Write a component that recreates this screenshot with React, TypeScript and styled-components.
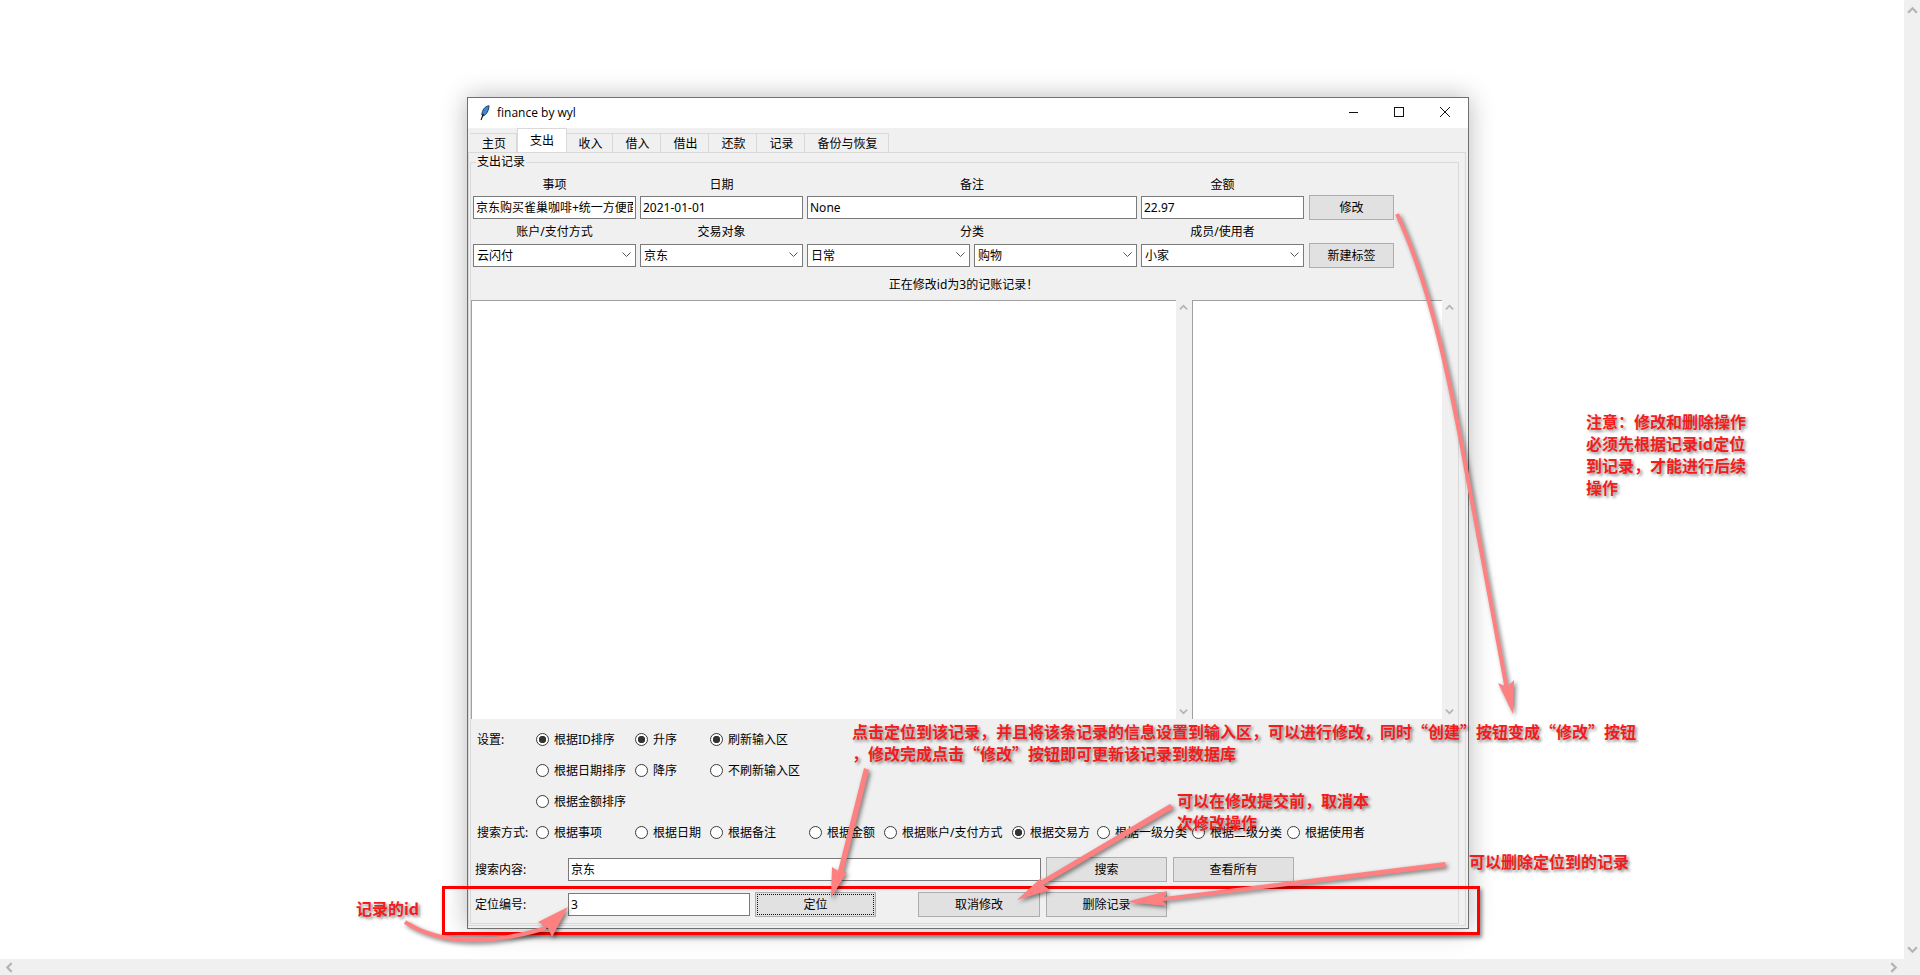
import React from "react";
import styled, { createGlobalStyle } from "styled-components";

const Global = createGlobalStyle`
  html, body { margin: 0; padding: 0; background: #fff; overflow: hidden; }
  body { font-family: "Noto Sans", "Noto Sans CJK SC", sans-serif; font-size: 12px; color: #000; }
`;

const Viewport = styled.div`
  position: relative;
  width: 1920px;
  height: 975px;
  overflow: hidden;
  display: grid;
  grid-template-columns: 1fr 16px;
  grid-template-rows: 1fr 16px;
`;
const Canvas = styled.main`
  padding: 97px 0 0 467px;
  background: #fff;
  overflow: hidden;
`;
const PageBarV = styled.div`
  background: #f0f0f0;
  grid-row: 1 / 3;
  grid-column: 2;
  display: flex;
  flex-direction: column;
  justify-content: space-between;
  align-items: center;
  padding: 5px 0 20px;
`;
const PageBarH = styled.div`
  background: #f0f0f0;
  display: flex;
  justify-content: space-between;
  align-items: center;
  padding: 0 5px 0 4px;
`;

const Win = styled.section`
  width: 1002px;
  box-sizing: border-box;
  border: 1px solid #6f6f6f;
  background: #f0f0f0;
  box-shadow: 0 0 24px rgba(0, 0, 0, 0.28);
`;
const TitleBar = styled.header`
  height: 30px;
  background: #fff;
  display: flex;
  align-items: center;
  padding-left: 12px;
`;
const TitleText = styled.span`
  margin: 0 0 2px 7px;
  font-size: 12px;
  font-family: "Open Sans", "Noto Sans", sans-serif;
`;
const WinControls = styled.div`
  margin-left: auto;
  display: flex;
`;
const WinButton = styled.span`
  box-sizing: border-box;
  width: 46px;
  height: 30px;
  padding-bottom: 2px;
  display: flex;
  align-items: center;
  justify-content: center;
`;

const TabStrip = styled.nav`
  height: 24px;
  display: flex;
  align-items: flex-end;
  padding-left: 2px;
`;
const Tab = styled.span<{ $w: number; $active?: boolean }>`
  box-sizing: border-box;
  width: ${(p) => p.$w}px;
  height: ${(p) => (p.$active ? 24 : 19)}px;
  padding: 0 0 ${(p) => (p.$active ? 2 : 1)}px ${(p) => (p.$active ? 0 : 2)}px;
  background: ${(p) => (p.$active ? "#fff" : "#f0f0f0")};
  border: 1px solid #d9d9d9;
  border-width: 1px 1px 0 ${(p) => (p.$active ? 1 : 0)}px;
  display: flex;
  align-items: center;
  justify-content: center;
`;
const TabPanel = styled.div`
  border: 1px solid #d9d9d9;
  margin: 0 2px 2px 0;
  padding: 9px 6px 1px 1px;
`;
const Frame = styled.div`
  position: relative;
  border: 1px solid #d9d9d9;
  padding-bottom: 6px;
`;
const Legend = styled.span`
  position: absolute;
  left: 5px;
  top: -9px;
  line-height: 16px;
  padding: 0 1px;
  background: #f0f0f0;
`;

const FormGrid = styled.div`
  margin: 11px 0 0 2px;
  display: grid;
  grid-template-columns: repeat(6, 163px);
  grid-template-rows: 21px 25px 23px 25px;
  column-gap: 4px;
  align-items: center;
`;
const FieldLabel = styled.label`
  text-align: center;
  padding-bottom: 2px;
`;
const WideLabel = styled(FieldLabel)`
  grid-column: span 2;
`;
const GapCell = styled.span``;
const Entry = styled.input<{ $w?: number }>`
  box-sizing: border-box;
  height: 23px;
  width: ${(p) => (p.$w ? `${p.$w}px` : "100%")};
  border: 1px solid #7a7a7a;
  padding: 0 2px 1px;
  margin: 0;
  outline: none;
  background: #fff;
  color: #000;
  font: 12px "Noto Sans", "Noto Sans CJK SC", sans-serif;
`;
const WideEntry = styled(Entry)`
  grid-column: span 2;
`;
const Combo = styled.div`
  box-sizing: border-box;
  height: 23px;
  border: 1px solid #7a7a7a;
  background: #fff;
  padding: 0 4px 1px 3px;
  display: flex;
  align-items: center;
  justify-content: space-between;
`;
const Btn = styled.button<{ $w: number; $ml?: number; $focus?: boolean }>`
  box-sizing: border-box;
  width: ${(p) => p.$w}px;
  height: 25px;
  margin: 0 0 0 ${(p) => p.$ml ?? 0}px;
  padding: 0 0 1px;
  background: #e1e1e1;
  border: 1px solid #adadad;
  color: #000;
  font: 12px "Noto Sans", "Noto Sans CJK SC", sans-serif;
  outline: ${(p) => (p.$focus ? "1px dotted #111" : "none")};
  outline-offset: -3px;
`;
const Status = styled.div`
  height: 32px;
  display: flex;
  align-items: center;
  justify-content: center;
  margin-right: 2px;
`;
const TextRow = styled.div`
  display: flex;
  height: 419px;
`;
const TextPane = styled.div<{ $w: number }>`
  box-sizing: border-box;
  width: ${(p) => p.$w}px;
  background: #fff;
  border-left: 1px solid #a0a0a0;
  border-top: 1px solid #a0a0a0;
`;
const ScrollTrack = styled.div`
  width: 16px;
  display: flex;
  flex-direction: column;
  justify-content: space-between;
  align-items: center;
  padding: 3px 1px 3px 0;
  box-sizing: border-box;
`;
const Options = styled.div`
  margin: 5px 0 0 6px;
  display: grid;
  grid-template-columns: 59px 99px 75px 99px 75px 128px 85px 95px 95px auto;
  grid-auto-rows: 31px;
  align-items: center;
`;
const RowLabel = styled.span`
  grid-column: 1;
  white-space: nowrap;
  padding-bottom: 1px;
`;
const Option = styled.span`
  display: flex;
  align-items: center;
  gap: 5px;
  white-space: nowrap;
`;
const OptionText = styled.span`
  margin-top: -1px;
`;
const RadioDot = styled.span<{ $on?: boolean }>`
  box-sizing: border-box;
  width: 13px;
  height: 13px;
  flex: none;
  border-radius: 50%;
  border: 1px solid #3a3a3a;
  background: ${(p) => (p.$on ? "radial-gradient(circle, #333 0 3.4px, #fff 4px)" : "#fff")};
`;
const ActionRow = styled.div<{ $mt: number }>`
  display: flex;
  align-items: center;
  height: 25px;
  margin: ${(p) => p.$mt}px 0 0 4px;
  gap: 5px;
`;
const ActionLabel = styled.span`
  width: 88px;
  padding-bottom: 1px;
`;

/* Annotations drawn on top of the screenshot */
const Overlay = styled.svg`
  position: absolute;
  left: 0;
  top: 0;
  width: 1920px;
  height: 975px;
  pointer-events: none;
  filter: drop-shadow(2px 2px 2px rgba(0, 0, 0, 0.5));
`;
const ArrowShape = styled.path`
  fill: #ff8080;
`;
const ArrowStem = styled.path`
  fill: none;
  stroke: #ff8080;
  stroke-width: 4;
`;
const RedBox = styled.div`
  position: absolute;
  left: 442px;
  top: 886px;
  width: 1032px;
  height: 43px;
  border: 3px solid #f00;
  box-shadow: 2px 3px 4px rgba(0, 0, 0, 0.45);
`;
const Note = styled.div<{ $x: number; $y: number; $w: number }>`
  position: absolute;
  left: ${(p) => p.$x}px;
  top: ${(p) => p.$y}px;
  width: ${(p) => p.$w}px;
  font: 700 16px/22px "Noto Sans CJK SC", "Noto Sans", sans-serif;
  color: #f41c1c;
  text-shadow: 2px 2px 3px rgba(0, 0, 0, 0.45);
`;

const Chevron = ({ dir, size = 9 }: { dir: "up" | "down" | "left" | "right"; size?: number }) => {
  const rot = { up: 180, down: 0, left: 90, right: -90 }[dir];
  return (
    <svg width={size} height={size} viewBox="0 0 10 10" style={{ transform: `rotate(${rot}deg)` }}>
      <path d="M1 3 L5 7 L9 3" fill="none" stroke="#b4b4b4" strokeWidth="2" />
    </svg>
  );
};
const ComboArrow = () => (
  <svg width="9" height="6" viewBox="0 0 9 6">
    <path d="M0.5 0.5 L4.5 4.5 L8.5 0.5" fill="none" stroke="#555" strokeWidth="1" />
  </svg>
);
const Feather = () => (
  <svg width="10" height="16" viewBox="0 0 10 16">
    <path d="M9 0.8 C5 1 2 5 1.8 10 L3 11 C6.5 10 9 5 9 0.8Z" fill="#3b86d6" stroke="#16324f" strokeWidth="0.9" />
    <path d="M3.4 9 L1 15" stroke="#111" strokeWidth="1.1" fill="none" />
  </svg>
);

const tabs: [string, number, boolean?][] = [
  ["主页", 47], ["支出", 50, true], ["收入", 46], ["借入", 48], ["借出", 48], ["还款", 48], ["记录", 48], ["备份与恢复", 84],
];

const Radio = ({ text, on }: { text: string; on?: boolean }) => (
  <Option>
    <RadioDot $on={on} />
    <OptionText>{text}</OptionText>
  </Option>
);

export default function App() {
  return (
    <Viewport>
      <Global />
      <Canvas>
        <Win>
          <TitleBar>
            <Feather />
            <TitleText>finance by wyl</TitleText>
            <WinControls>
              <WinButton>
                <svg width="10" height="10" viewBox="0 0 10 10"><path d="M1 5.5H11" stroke="#111" /></svg>
              </WinButton>
              <WinButton>
                <svg width="10" height="10" viewBox="0 0 10 10"><rect x="0.5" y="0.5" width="9" height="9" fill="none" stroke="#111" /></svg>
              </WinButton>
              <WinButton>
                <svg width="10" height="10" viewBox="0 0 10 10"><path d="M0 0L10 10M10 0L0 10" stroke="#111" /></svg>
              </WinButton>
            </WinControls>
          </TitleBar>
          <TabStrip>
            {tabs.map(([t, w, a]) => (
              <Tab key={t} $w={w} $active={a}>{t}</Tab>
            ))}
          </TabStrip>
          <TabPanel>
            <Frame>
              <Legend>支出记录</Legend>
              <FormGrid>
                <FieldLabel>事项</FieldLabel>
                <FieldLabel>日期</FieldLabel>
                <WideLabel>备注</WideLabel>
                <FieldLabel>金额</FieldLabel>
                <GapCell />
                <Entry readOnly value="京东购买雀巢咖啡+统一方便面" />
                <Entry readOnly value="2021-01-01" />
                <WideEntry readOnly value="None" />
                <Entry readOnly value="22.97" />
                <Btn $w={85} $ml={1}>修改</Btn>
                <FieldLabel>账户/支付方式</FieldLabel>
                <FieldLabel>交易对象</FieldLabel>
                <WideLabel>分类</WideLabel>
                <FieldLabel>成员/使用者</FieldLabel>
                <GapCell />
                <Combo>云闪付<ComboArrow /></Combo>
                <Combo>京东<ComboArrow /></Combo>
                <Combo>日常<ComboArrow /></Combo>
                <Combo>购物<ComboArrow /></Combo>
                <Combo>小家<ComboArrow /></Combo>
                <Btn $w={85} $ml={1}>新建标签</Btn>
              </FormGrid>
              <Status>正在修改id为3的记账记录！</Status>
              <TextRow>
                <TextPane $w={705} />
                <ScrollTrack><Chevron dir="up" /><Chevron dir="down" /></ScrollTrack>
                <TextPane $w={250} />
                <ScrollTrack><Chevron dir="up" /><Chevron dir="down" /></ScrollTrack>
              </TextRow>
              <Options>
                <RowLabel>设置:</RowLabel>
                <Radio text="根据ID排序" on />
                <Radio text="升序" on />
                <Radio text="刷新输入区" on />
                <RowLabel />
                <Radio text="根据日期排序" />
                <Radio text="降序" />
                <Radio text="不刷新输入区" />
                <RowLabel />
                <Radio text="根据金额排序" />
                <RowLabel>搜索方式:</RowLabel>
                <Radio text="根据事项" />
                <Radio text="根据日期" />
                <Radio text="根据备注" />
                <Radio text="根据金额" />
                <Radio text="根据账户/支付方式" />
                <Radio text="根据交易方" on />
                <Radio text="根据一级分类" />
                <Radio text="根据二级分类" />
                <Radio text="根据使用者" />
              </Options>
              <ActionRow $mt={9}>
                <ActionLabel>搜索内容:</ActionLabel>
                <Entry readOnly $w={473} value="京东" />
                <Btn $w={121}>搜索</Btn>
                <Btn $w={121} $ml={1}>查看所有</Btn>
              </ActionRow>
              <ActionRow $mt={10}>
                <ActionLabel>定位编号:</ActionLabel>
                <Entry readOnly $w={182} value="3" />
                <Btn $w={121} $focus>定位</Btn>
                <Btn $w={122} $ml={37}>取消修改</Btn>
                <Btn $w={121} $ml={1}>删除记录</Btn>
              </ActionRow>
            </Frame>
          </TabPanel>
        </Win>
      </Canvas>
      <PageBarV><Chevron dir="up" size={11} /><Chevron dir="down" size={11} /></PageBarV>
      <PageBarH><Chevron dir="left" size={11} /><Chevron dir="right" size={11} /></PageBarH>

      <RedBox />
      <Overlay viewBox="0 0 1920 975">
        <ArrowStem d="M1397 214 C1425 275 1445 350 1468 480 L1507 690" />
        <ArrowShape d="M1498 683 L1507 687 L1514 680 L1513 714 Z" />
        <ArrowShape d="M864 768 L869 770 L843 873 L847 872 L831 898 L832 867 L838 871 Z" />
        <ArrowShape d="M1170 804 L1040 881 L1042 877 L1017 900 L1050 890 L1043 885 L1174 808 Z" />
        <ArrowShape d="M1445 862 L1164 897 L1167 891 L1126 902 L1167 906 L1163 901 L1446 867 Z" />
        <ArrowStem d="M405 922 C440 945 490 945 546 928" />
        <ArrowShape d="M538 922 L548 928 L552 937 L568 907 Z" />
      </Overlay>
      <Note $x={852} $y={720} $w={800}>点击定位到该记录，并且将该条记录的信息设置到输入区，可以进行修改，同时“创建”按钮变成“修改”按钮<br />，修改完成点击“修改”按钮即可更新该记录到数据库</Note>
      <Note $x={1177} $y={789} $w={200}>可以在修改提交前，取消本次修改操作</Note>
      <Note $x={1469} $y={850} $w={180}>可以删除定位到的记录</Note>
      <Note $x={356} $y={897} $w={80}>记录的id</Note>
      <Note $x={1586} $y={410} $w={165}>注意：修改和删除操作必须先根据记录id定位到记录，才能进行后续操作</Note>
    </Viewport>
  );
}
